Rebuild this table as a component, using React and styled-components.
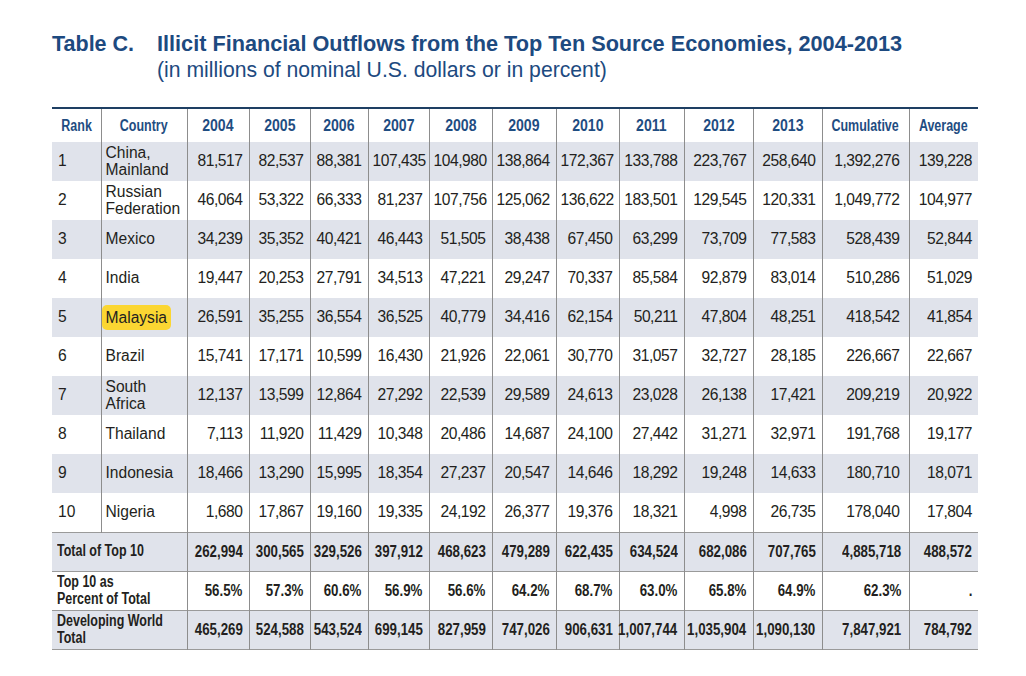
import React from "react";
import styled, { createGlobalStyle } from "styled-components";

const GlobalStyle = createGlobalStyle`
  body {
    margin: 0;
    background: #ffffff;
    font-family: "Liberation Sans", Arial, sans-serif;
  }
`;

const colWidths = [49, 86, 62, 61, 58, 61, 63, 64, 63, 65, 69, 69, 87, 69];
const headers = ["Rank", "Country", "2004", "2005", "2006", "2007", "2008", "2009", "2010", "2011", "2012", "2013", "Cumulative", "Average"];

const rows = [
  ["1", ["China,", "Mainland"], "81,517", "82,537", "88,381", "107,435", "104,980", "138,864", "172,367", "133,788", "223,767", "258,640", "1,392,276", "139,228"],
  ["2", ["Russian", "Federation"], "46,064", "53,322", "66,333", "81,237", "107,756", "125,062", "136,622", "183,501", "129,545", "120,331", "1,049,772", "104,977"],
  ["3", ["Mexico"], "34,239", "35,352", "40,421", "46,443", "51,505", "38,438", "67,450", "63,299", "73,709", "77,583", "528,439", "52,844"],
  ["4", ["India"], "19,447", "20,253", "27,791", "34,513", "47,221", "29,247", "70,337", "85,584", "92,879", "83,014", "510,286", "51,029"],
  ["5", ["Malaysia"], "26,591", "35,255", "36,554", "36,525", "40,779", "34,416", "62,154", "50,211", "47,804", "48,251", "418,542", "41,854"],
  ["6", ["Brazil"], "15,741", "17,171", "10,599", "16,430", "21,926", "22,061", "30,770", "31,057", "32,727", "28,185", "226,667", "22,667"],
  ["7", ["South", "Africa"], "12,137", "13,599", "12,864", "27,292", "22,539", "29,589", "24,613", "23,028", "26,138", "17,421", "209,219", "20,922"],
  ["8", ["Thailand"], "7,113", "11,920", "11,429", "10,348", "20,486", "14,687", "24,100", "27,442", "31,271", "32,971", "191,768", "19,177"],
  ["9", ["Indonesia"], "18,466", "13,290", "15,995", "18,354", "27,237", "20,547", "14,646", "18,292", "19,248", "14,633", "180,710", "18,071"],
  ["10", ["Nigeria"], "1,680", "17,867", "19,160", "19,335", "24,192", "26,377", "19,376", "18,321", "4,998", "26,735", "178,040", "17,804"],
];

const totals = [
  [["Total of Top 10"], "262,994", "300,565", "329,526", "397,912", "468,623", "479,289", "622,435", "634,524", "682,086", "707,765", "4,885,718", "488,572"],
  [["Top 10 as", "Percent of Total"], "56.5%", "57.3%", "60.6%", "56.9%", "56.6%", "64.2%", "68.7%", "63.0%", "65.8%", "64.9%", "62.3%", "."],
  [["Developing World", "Total"], "465,269", "524,588", "543,524", "699,145", "827,959", "747,026", "906,631", "1,007,744", "1,035,904", "1,090,130", "7,847,921", "784,792"],
];

export default function App() {
  return (
    <Page>
      <GlobalStyle />
      <TitleBlock>
        <Label>Table C.</Label>
        <div>
          <Title>Illicit Financial Outflows from the Top Ten Source Economies, 2004-2013</Title>
          <Subtitle>(in millions of nominal U.S. dollars or in percent)</Subtitle>
        </div>
      </TitleBlock>
      <Table>
        <colgroup>
          {colWidths.map((w, i) => (
            <Col key={i} $w={w} />
          ))}
        </colgroup>
        <thead>
          <tr>
            {headers.map((h, i) => (
              <Th key={h} $first={i === 0}>
                <Fit $justify="center">
                  <Condensed $origin="center" $k={/^\d/.test(h) ? 0.88 : 0.78}>
                    {h}
                  </Condensed>
                </Fit>
              </Th>
            ))}
          </tr>
        </thead>
        <tbody>
          {rows.map((r, i) => (
            <Row key={r[0]} $shade={i % 2 === 0} $last={i === rows.length - 1}>
              <Td $first>{r[0]}</Td>
              <Td $text>
                {r[1][0] === "Malaysia" ? (
                  <Highlight>{r[1][0]}</Highlight>
                ) : (
                  r[1].map((l) => <Line key={l}>{l}</Line>)
                )}
              </Td>
              {r.slice(2).map((v, j) => (
                <Td key={j} $num $cum={j === 10}>
                  {v}
                </Td>
              ))}
            </Row>
          ))}
          {totals.map((r, i) => (
            <TotalRow key={i} $shade={i % 2 === 0}>
              <TotalLabel colSpan={2}>
                {r[0].map((l) => (
                  <Line key={l}>
                    <Condensed $origin="left" $k={0.78}>
                      {l}
                    </Condensed>
                  </Line>
                ))}
              </TotalLabel>
              {r.slice(1).map((v, j) => (
                <TotalTd key={j} $cum={j === 10}>
                  <Fit $justify="flex-end">
                    <Condensed $origin="right" $k={0.83}>
                      {v}
                    </Condensed>
                  </Fit>
                </TotalTd>
              ))}
            </TotalRow>
          ))}
        </tbody>
      </Table>
    </Page>
  );
}

const Page = styled.div`
  padding: 31px 0 40px 52px;
`;

const TitleBlock = styled.div`
  display: grid;
  grid-template-columns: 105px auto;
  color: #1d4a80;
`;

const Label = styled.div`
  font-size: 21.5px;
  line-height: 24px;
  font-weight: 700;
  padding-top: 1px;
`;

const Title = styled.div`
  font-size: 21.7px;
  line-height: 24px;
  font-weight: 700;
  padding-top: 1px;
`;

const Subtitle = styled.div`
  font-size: 21.2px;
  line-height: 26px;
  margin-top: 1px;
`;

const Table = styled.table`
  margin-top: 24px;
  width: 926px;
  table-layout: fixed;
  border-collapse: collapse;
  border-top: 2px solid #1e3f63;
  color: #231f20;
`;

const Col = styled.col`
  width: ${(p) => p.$w}px;
`;

const Fit = styled.div`
  display: flex;
  justify-content: ${(p) => p.$justify};
`;

/* no bold condensed face is installed, so the bold face is squeezed */
const Condensed = styled.span`
  display: inline-block;
  flex: none;
  white-space: nowrap;
  transform: scaleX(${(p) => p.$k});
  transform-origin: ${(p) => p.$origin};
`;

const Th = styled.th`
  height: 33px;
  padding: 0;
  text-align: center;
  vertical-align: middle;
  font-size: 16px;
  font-weight: 700;
  color: #1f4d82;
  white-space: nowrap;
  border-left: ${(p) => (p.$first ? "none" : "1px solid #8d8d8d")};
`;

const Row = styled.tr`
  height: 39px;
  background: ${(p) => (p.$shade ? "#e0e3eb" : "#ffffff")};
  border-bottom: ${(p) => (p.$last ? "1px solid #9a9a9a" : "none")};
`;

const Td = styled.td`
  padding: 0 ${(p) => (p.$cum ? "9px" : p.$num ? "6px" : "4px")} 0
    ${(p) => (p.$first ? "6px" : "4px")};
  text-align: ${(p) => (p.$num ? "right" : "left")};
  vertical-align: middle;
  font-size: 15.6px;
  line-height: 16.5px;
  letter-spacing: ${(p) => (p.$num ? "-0.45px" : "0")};
  white-space: nowrap;
  border-left: ${(p) => (p.$first ? "none" : "1px solid #8d8d8d")};
`;

const Line = styled.span`
  display: block;
`;

const Highlight = styled.span`
  display: inline-block;
  margin-left: -4px;
  padding: 0 4px;
  height: 25px;
  line-height: 25px;
  border-radius: 5px;
  background: #fbd632;
`;

const TotalRow = styled.tr`
  height: 39px;
  background: ${(p) => (p.$shade ? "#e0e3eb" : "#ffffff")};
  border-bottom: 1px solid #9a9a9a;
`;

const TotalLabel = styled.td`
  padding: 0 4px 0 5px;
  vertical-align: middle;
  font-size: 16px;
  line-height: 16.5px;
  font-weight: 700;
  white-space: nowrap;
`;

const TotalTd = styled.td`
  padding: 0 ${(p) => (p.$cum ? "7px" : "6px")} 0 0;
  vertical-align: middle;
  font-size: 16px;
  font-weight: 700;
  white-space: nowrap;
  border-left: 1px solid #8d8d8d;
`;
